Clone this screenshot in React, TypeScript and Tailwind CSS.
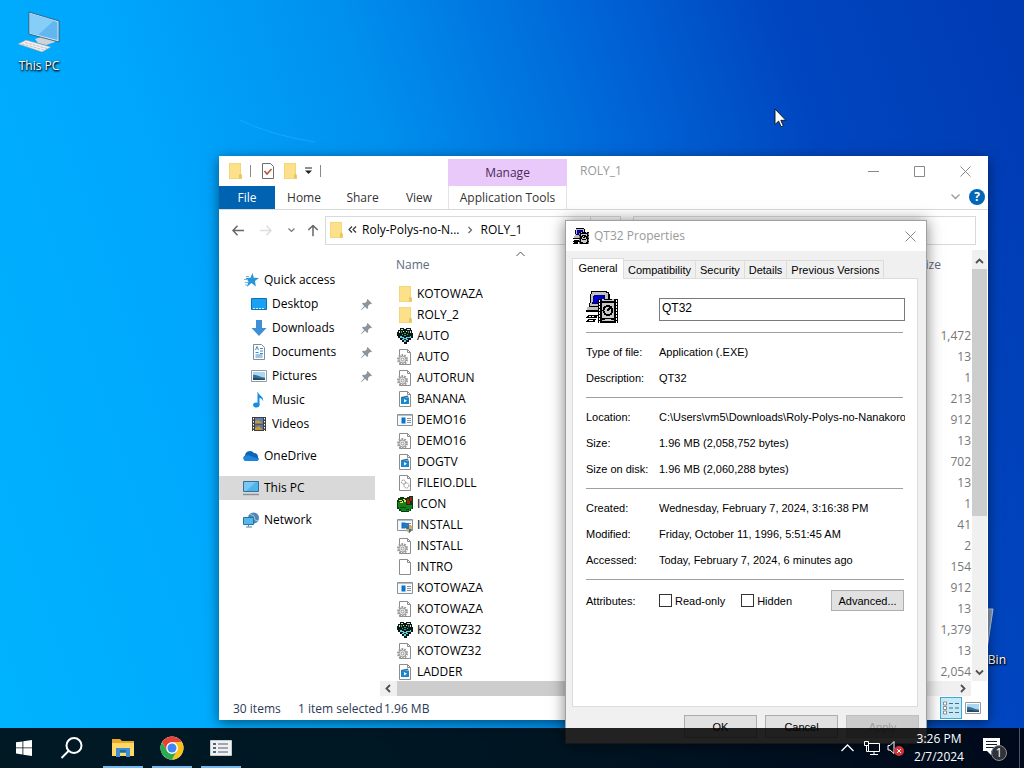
import { useState } from "react";
import type { ReactNode } from "react";

type FileKind = "folder" | "heart" | "ini" | "movie" | "exe" | "dll" | "roly" | "setup" | "blank";

type FileRow = {
  name: string;
  kind: FileKind;
  size: string;
};

const files: FileRow[] = [
  { name: "KOTOWAZA", kind: "folder", size: "" },
  { name: "ROLY_2", kind: "folder", size: "" },
  { name: "AUTO", kind: "heart", size: "1,472" },
  { name: "AUTO", kind: "ini", size: "13" },
  { name: "AUTORUN", kind: "ini", size: "1" },
  { name: "BANANA", kind: "movie", size: "213" },
  { name: "DEMO16", kind: "exe", size: "912" },
  { name: "DEMO16", kind: "ini", size: "13" },
  { name: "DOGTV", kind: "movie", size: "702" },
  { name: "FILEIO.DLL", kind: "dll", size: "13" },
  { name: "ICON", kind: "roly", size: "1" },
  { name: "INSTALL", kind: "setup", size: "41" },
  { name: "INSTALL", kind: "ini", size: "2" },
  { name: "INTRO", kind: "blank", size: "154" },
  { name: "KOTOWAZA", kind: "exe", size: "912" },
  { name: "KOTOWAZA", kind: "ini", size: "13" },
  { name: "KOTOWZ32", kind: "heart", size: "1,379" },
  { name: "KOTOWZ32", kind: "ini", size: "13" },
  { name: "LADDER", kind: "movie", size: "2,054" },
];

const details: [string, string][][] = [
  [
    ["Type of file:", "Application (.EXE)"],
    ["Description:", "QT32"],
  ],
  [
    ["Location:", "C:\\Users\\vm5\\Downloads\\Roly-Polys-no-Nanakorob"],
    ["Size:", "1.96 MB (2,058,752 bytes)"],
    ["Size on disk:", "1.96 MB (2,060,288 bytes)"],
  ],
  [
    ["Created:", "Wednesday, February 7, 2024, 3:16:38 PM"],
    ["Modified:", "Friday, October 11, 1996, 5:51:45 AM"],
    ["Accessed:", "Today, February 7, 2024, 6 minutes ago"],
  ],
];

const propertyTabs = ["General", "Compatibility", "Security", "Details", "Previous Versions"];

export default function App() {
  return (
    <div className="relative flex h-screen flex-col overflow-hidden bg-[linear-gradient(72deg,#00b4ff_0%,#00a6fc_28%,#0090ee_46%,#0068d8_64%,#0046c0_80%,#003ab2_100%)] font-['Open_Sans','Noto_Sans',sans-serif] text-[12px] leading-4 text-black select-none">
      <LightBeams />
      <DesktopIcons />
      <ExplorerWindow />
      <PropertiesDialog />
      <Taskbar />
      <svg className="absolute left-[774px] top-[108px]" width="13" height="20" viewBox="0 0 13 20" aria-hidden="true">
        <path d="M1 1v15.500l3.600-3.400 2.500 5.600 2.200-1-2.500-5.400h5z" fill="#fff" stroke="#111" strokeWidth="0.900" />
      </svg>
    </div>
  );
}

function LightBeams() {
  return (
    <svg className="absolute inset-0 h-full w-full" viewBox="0 0 1024 768" preserveAspectRatio="none" aria-hidden="true">
      <path d="M240 120Q270 135 315 142" fill="none" stroke="#6cccff" strokeWidth="1" opacity="0.250" />
    </svg>
  );
}

function DesktopIcons() {
  return (
    <>
      <button type="button" className="absolute left-[2px] top-[8px] flex w-[74px] flex-col items-center gap-[2px] text-white [text-shadow:0_1px_2px_#000,1px_1px_2px_#000]">
        <svg width="48" height="48" viewBox="0 0 48 48" aria-hidden="true">
          <path d="M20 31l6-2 14 3v2l-9 3-8-2z" fill="#cfd3d8" />
          <path d="M14 4l30 9v21l-30-8z" fill="#cfe9fb" stroke="#24506f" strokeWidth="0.800" />
          <path d="M15 5.500l27.500 8.500v18L15 25z" fill="#63b7f0" />
          <path d="M15 5.500l24 7-16 14.500-8-2z" fill="#86cdf8" />
          <path d="M3 36l8-4 25 7-9 5z" fill="#eef0f2" stroke="#8b98a5" strokeWidth="0.600" />
          <path d="M7 36l22 6M10 34.500l22 6" stroke="#a6adb5" strokeWidth="0.700" strokeDasharray="3 1" />
        </svg>
        <span>This PC</span>
      </button>
      <button type="button" aria-label="Recycle Bin" className="absolute left-[934px] top-[606px] flex w-[72px] flex-col items-center gap-[2px] text-white [text-shadow:0_1px_2px_#000,1px_1px_2px_#000]">
        <svg width="48" height="44" viewBox="0 0 48 44" aria-hidden="true">
          <path d="M5 3h42l-6 40H11z" fill="#8b9cb5" stroke="#b9cde8" />
        </svg>
        <span className="w-full text-right">Bin</span>
      </button>
    </>
  );
}

function ExplorerWindow() {
  return (
    <section aria-label="ROLY_1" className="absolute left-[219px] top-[156px] flex h-[564px] w-[769px] flex-col bg-white shadow-[0_3px_12px_rgba(0,0,0,0.5)]">
      <header className="flex h-[54px] shrink-0 border-b border-[#d9d9d9]">
        <div className="flex w-[228px] flex-col">
          <div className="flex h-[30px] items-center pl-2">
            <FileIcon kind="folder" />
            <Divider />
            <svg className="ml-[10px]" width="14" height="16" viewBox="0 0 14 16" aria-hidden="true">
              <path d="M1.500.5h8l3 3v12h-11z" fill="#fff" stroke="#6e6e6e" />
              <path d="M3.500 8l2.500 3 4.500-5" fill="none" stroke="#b3562f" strokeWidth="1.500" />
            </svg>
            <span className="ml-[7px]"><FileIcon kind="folder" /></span>
            <button type="button" aria-label="Customize Quick Access Toolbar" className="ml-[6px]">
              <svg width="9" height="8" viewBox="0 0 9 8" aria-hidden="true">
                <path d="M1 1h7" stroke="#222" />
                <path d="M1 3.500h7L4.500 7z" fill="#222" />
              </svg>
            </button>
            <Divider />
          </div>
          <nav className="flex h-[23px] text-[#333]">
            <button type="button" className="w-[56px] bg-[#0063b1] pt-px text-white">File</button>
            <button type="button" className="w-[58px] pt-px">Home</button>
            <button type="button" className="w-[59px] pt-px">Share</button>
            <button type="button" className="w-[54px] pt-px">View</button>
          </nav>
        </div>
        <div className="ml-px w-[119px] text-center">
          <div className="mt-[3px] h-[27px] bg-[#e9c9f9] pt-[6px] text-[#4a2a5c]">Manage</div>
          <button type="button" className="h-[23px] w-full border-x border-[#e6e0e9] pt-px text-[#333]">Application Tools</button>
        </div>
        <div className="flex flex-1 flex-col">
          <div className="flex h-[30px] items-center">
            <h1 className="ml-[13px] flex-1 text-[#999]">ROLY_1</h1>
            <button type="button" aria-label="Minimize" className="flex w-[46px] justify-center"><Glyph d="M0 5.500h11" /></button>
            <button type="button" aria-label="Maximize" className="flex w-[46px] justify-center"><Glyph d="M.5.500h10v10H.5z" /></button>
            <button type="button" aria-label="Close" className="flex w-[46px] justify-center"><Glyph d="M.5.500l10 10M10.500.500l-10 10" /></button>
          </div>
          <div className="flex items-center justify-end gap-[9px] pr-[3px] pt-[3px]">
            <button type="button" aria-label="Collapse ribbon">
              <svg width="9" height="6" viewBox="0 0 9 6" aria-hidden="true"><path d="M.5.500l4 4 4-4" fill="none" stroke="#999" strokeWidth="1.300" /></svg>
            </button>
            <button type="button" aria-label="Help" className="size-4 rounded-full bg-[#0067b8] text-[12px] leading-4 font-bold text-white">?</button>
          </div>
        </div>
      </header>

      <div className="flex h-[40px] shrink-0 items-center pr-3">
        <div className="flex w-[106px] items-center gap-[16px] pl-[13px]">
          <button type="button" aria-label="Back"><ArrowLeft color="#666" /></button>
          <button type="button" aria-label="Forward" className="rotate-180"><ArrowLeft color="#ddd" /></button>
          <button type="button" aria-label="Recent locations">
            <svg width="7" height="5" viewBox="0 0 7 5" aria-hidden="true"><path d="M.5.500l3 3 3-3" fill="none" stroke="#777" strokeWidth="1.200" /></svg>
          </button>
          <button type="button" aria-label="Up" className="-ml-1 rotate-90"><ArrowLeft color="#666" /></button>
        </div>
        <div className="flex h-[29px] flex-1 items-center border border-[#d9d9d9] pl-[2px]">
          <FileIcon kind="folder" />
          <svg className="ml-[4px]" width="9" height="8" viewBox="0 0 9 8" aria-hidden="true"><path d="M4 .5L1 3.500l3 3M8 .5L5 3.500l3 3" fill="none" stroke="#333" strokeWidth="1.200" /></svg>
          <button type="button" className="ml-[5px]">Roly-Polys-no-N...</button>
          <svg className="mx-[8px]" width="5" height="8" viewBox="0 0 5 8" aria-hidden="true"><path d="M.5 1l3 3-3 3" fill="none" stroke="#666" strokeWidth="1.200" /></svg>
          <button type="button">ROLY_1</button>
          <span className="ml-auto mr-[29px] h-full w-px bg-[#d9d9d9]" />
        </div>
        <input aria-label="Search ROLY_1" className="ml-[12px] h-[29px] w-[343px] border border-[#d9d9d9] px-2" />
      </div>

      <div className="flex min-h-0 flex-1">
        <nav aria-label="Folders" className="flex w-[156px] shrink-0 flex-col pt-[18px]">
          <NavItem icon="star" label="Quick access" />
          <NavItem icon="desktop" label="Desktop" child pinned />
          <NavItem icon="download" label="Downloads" child pinned />
          <NavItem icon="document" label="Documents" child pinned />
          <NavItem icon="picture" label="Pictures" child pinned />
          <NavItem icon="music" label="Music" child />
          <NavItem icon="video" label="Videos" child />
          <div className="mt-2"><NavItem icon="cloud" label="OneDrive" /></div>
          <div className="mt-2"><NavItem icon="pc" label="This PC" active /></div>
          <div className="mt-2"><NavItem icon="network" label="Network" /></div>
        </nav>
        <div className="ml-[5px] flex min-w-0 flex-1 flex-col">
          <div className="flex min-h-0 flex-1">
            <div className="min-w-0 flex-1 overflow-hidden">
              <table className="w-full border-collapse">
                <thead>
                  <tr className="h-[33px] text-left align-top text-[#5d6b7e]">
                    <th className="relative w-[281px] pl-4 pt-[7px] font-normal">
                      Name
                      <svg className="absolute left-[136px] top-[1px]" width="9" height="6" viewBox="0 0 9 6" aria-hidden="true"><path d="M.5 5l4-4 4 4" fill="none" stroke="#555" /></svg>
                    </th>
                    <th className="pl-[258px] pt-[7px] font-normal">Size</th>
                  </tr>
                </thead>
                <tbody>
                  {files.map((file, i) => (
                    <tr key={i} className="h-[21px]">
                      <td className="py-0 pl-[17px]">
                        <span className="flex items-center gap-1">
                          <FileIcon kind={file.kind} />
                          {file.name}
                        </span>
                      </td>
                      <td className="py-0 pr-px text-right text-[#777]">{file.size}</td>
                    </tr>
                  ))}
                </tbody>
              </table>
            </div>
            <div className="mr-px flex w-[15px] flex-col items-center bg-[#f0f0f0] pb-[4px] pt-[7px]">
              <Chevron d="M1 6l3.500-3.500L8 6" />
              <div className="mb-auto mt-[3px] h-[247px] w-full bg-[#cdcdcd]" />
              <Chevron d="M1 2.500L4.500 6 8 2.500" />
            </div>
          </div>
          <div className="mr-[17px] flex h-[15px] items-center bg-[#f0f0f0] px-[4px]">
            <Chevron d="M6 1L2.500 4.500 6 8" />
            <div className="ml-[4px] h-full w-[450px] bg-[#cdcdcd]" />
            <span className="ml-auto"><Chevron d="M3 1l3.500 3.500L3 8" /></span>
          </div>
        </div>
      </div>

      <footer className="flex h-[24px] shrink-0 items-center pl-[14px] text-[#2b3a57]">
        <span className="w-[65px] pt-px">30 items</span>
        <span className="w-[86px] whitespace-nowrap pt-px">1 item selected</span>
        <span className="pt-px">1.96 MB</span>
        <button type="button" aria-label="Details view" className="ml-auto flex h-[22px] w-[22px] items-center justify-center border border-[#3fa9cf] bg-[#c5e9f7]">
          <svg width="16" height="14" viewBox="0 0 16 14" aria-hidden="true">
            <path d="M.5 1h3v3h-3zM.5 5.500h3v3h-3zM.5 10h3v3h-3z" fill="#fff" stroke="#777" strokeWidth="0.800" />
            <path d="M6 2.500h10M6 7h10M6 11.500h10" stroke="#3b6d8c" strokeDasharray="4 2" />
          </svg>
        </button>
        <button type="button" aria-label="Large icons view" className="ml-[3px] mr-[7px]">
          <NavIcon name="picture" />
        </button>
      </footer>
    </section>
  );
}

function PropertiesDialog() {
  const [tab, setTab] = useState("General");
  const [name, setName] = useState("QT32");

  return (
    <section role="dialog" aria-label="QT32 Properties" className="absolute left-[565px] top-[220px] flex h-[524px] w-[362px] flex-col border border-[#a0a0a0] bg-[#f0f0f0] shadow-[0_1px_14px_rgba(0,0,0,0.5)]">
      <header className="flex h-[30px] shrink-0 items-center bg-white pl-[7px] pr-[10px]">
        <MovieIcon size={16} />
        <h2 className="ml-[5px] flex-1 text-[#999]">QT32 Properties</h2>
        <button type="button" aria-label="Close dialog"><Glyph d="M.5.500l10 10M10.500.500l-10 10" /></button>
      </header>
      <div className="flex flex-1 flex-col px-[6px] pt-[7px] font-['Liberation_Sans',Arial,sans-serif] text-[11px] leading-[14px]">
        <div role="tablist" className="relative z-10 -mb-px flex items-end">
          {propertyTabs.map((label) => (
            <button
              key={label}
              type="button"
              role="tab"
              aria-selected={tab === label}
              onClick={() => setTab(label)}
              className={
                tab === label
                  ? "h-[21px] w-[52px] border border-b-0 border-[#dcdcdc] bg-white pb-[2px]"
                  : "mb-px h-[18px] border border-b-0 border-l-0 border-[#dcdcdc] px-[4px]"
              }
            >
              {label}
            </button>
          ))}
        </div>
        <div className="mr-[2px] flex h-[429px] flex-col border border-[#dcdcdc] bg-white pl-[13px] pr-[12px] pt-[12px]">
          <div className="flex h-[41px] items-start">
            <span className="w-[73px]"><MovieIcon size={32} /></span>
            <input
              aria-label="File name"
              value={name}
              onChange={(e) => setName(e.target.value)}
              className="mt-[7px] h-[23px] min-w-0 flex-1 border border-[#7a7a7a] bg-white px-[2px] pb-[3px] text-[12px] outline-none"
            />
          </div>
          {details.map((group, i) => (
            <dl key={i} className="mr-[2px] flex flex-col gap-[12px] border-t border-[#a0a0a0] pb-[12px] pt-[12px]">
              {group.map(([label, value]) => (
                <div key={label} className="-mr-[2px] flex">
                  <dt className="w-[73px] shrink-0">{label}</dt>
                  <dd className="min-w-0 overflow-hidden whitespace-nowrap">{value}</dd>
                </div>
              ))}
            </dl>
          ))}
          <div className="mr-px flex items-center border-t border-[#a0a0a0] pt-[10px]">
            <span className="w-[73px]">Attributes:</span>
            <Check label="Read-only" />
            <span className="w-[16px]" />
            <Check label="Hidden" />
            <button type="button" className="ml-auto h-[21px] w-[73px] border border-[#adadad] bg-[#e1e1e1]">Advanced...</button>
          </div>
        </div>
        <div className="flex justify-end gap-[8px] pr-px pt-[8px]">
          <button type="button" className="h-[23px] w-[73px] border border-[#adadad] bg-[#e1e1e1]">OK</button>
          <button type="button" className="h-[23px] w-[73px] border border-[#adadad] bg-[#e1e1e1]">Cancel</button>
          <button type="button" disabled className="h-[23px] w-[73px] border border-[#bfbfbf] bg-[#cccccc] text-[#a0a0a0]">Apply</button>
        </div>
      </div>
    </section>
  );
}

function Taskbar() {
  return (
    <footer className="relative mt-auto flex h-[40px] items-center bg-black/[0.86] text-white">
      <button type="button" aria-label="Start" className="flex h-full w-[48px] items-center justify-center">
        <svg width="16" height="16" viewBox="0 0 16 16" fill="#fff" aria-hidden="true"><path d="M0 2.300l6.500-.9v6.100H0zM7.300 1.300L16 0v7.500H7.300zM0 8.300h6.500v6.200L0 13.600zM7.300 8.300H16V16l-8.700-1.300z" /></svg>
      </button>
      <button type="button" aria-label="Search" className="flex h-full w-[48px] items-center justify-center">
        <svg width="24" height="24" viewBox="0 0 24 24" fill="none" stroke="#fff" strokeWidth="2" aria-hidden="true"><circle cx="14" cy="9.500" r="7.500" /><path d="M8.500 15L1.500 22" /></svg>
      </button>
      <TaskButton label="File Explorer">
        <svg width="22" height="20" viewBox="0 0 22 20" aria-hidden="true">
          <path d="M0 1h8l2 2h12v15H0z" fill="#e7a928" />
          <path d="M0 5h22v13H0z" fill="#ffd868" />
          <path d="M4 10h14v9h-4v-4H8v4H4z" fill="#3b8ed0" />
          <path d="M8 12h6v2H8z" fill="#1f69ac" />
        </svg>
      </TaskButton>
      <TaskButton label="Google Chrome">
        <svg width="24" height="24" viewBox="0 0 48 48" aria-hidden="true">
          <circle cx="24" cy="24" r="23" fill="#fff" />
          <path d="M4.100 12.500A23 23 0 0 1 43.900 12.500H24A11.500 11.500 0 0 0 14 18.200L13.500 29z" fill="#e94235" />
          <path d="M43.900 12.500A23 23 0 0 1 24 47L34 29.700A11.500 11.500 0 0 0 24 12.500z" fill="#fbc116" />
          <path d="M4.100 12.500A23 23 0 0 0 24 47L34 29.700A11.500 11.500 0 0 1 14 29.700z" fill="#2da94f" />
          <circle cx="24" cy="24" r="11.500" fill="#fff" />
          <circle cx="24" cy="24" r="9" fill="#4285f4" />
        </svg>
      </TaskButton>
      <TaskButton label="Properties">
        <svg width="22" height="16" viewBox="0 0 22 16" aria-hidden="true">
          <path d="M.5.500h21v15H.5z" fill="#f1f1f1" stroke="#c5ccd0" />
          <path d="M3 4h3M3 8h3M3 12h3" stroke="#567" strokeWidth="2" />
          <path d="M8 4h10M8 8h10M8 12h10" stroke="#83909a" strokeWidth="1.400" />
        </svg>
      </TaskButton>
      <div className="ml-auto flex h-full items-center">
        <button type="button" aria-label="Show hidden icons">
          <svg width="13" height="8" viewBox="0 0 13 8" fill="none" stroke="#fff" strokeWidth="1.300" aria-hidden="true"><path d="M.5 7l6-6 6 6" /></svg>
        </button>
        <svg className="ml-[10px]" width="17" height="15" viewBox="0 0 17 15" fill="none" stroke="#fff" aria-hidden="true">
          <path d="M4.500 2.500h11v8h-11zM10 10.500v3M6 13.500h8M.5.500h4v4h-4zM2.500 4.500v6h2" />
        </svg>
        <svg className="ml-[6px]" width="18" height="16" viewBox="0 0 18 16" aria-hidden="true">
          <path d="M1 5.500h2l4-4v12l-4-3.500H1z" fill="none" stroke="#fff" />
          <circle cx="12" cy="11" r="5" fill="#d13438" />
          <path d="M10 9l4 4M14 9l-4 4" stroke="#fff" />
        </svg>
        <button type="button" className="ml-px w-[66px] text-center leading-[18px]">
          <span className="block">3:26 PM</span>
          <span className="block">2/7/2024</span>
        </button>
        <button type="button" aria-label="Notifications" className="ml-[10px] mr-[11px]">
          <svg width="26" height="26" viewBox="0 0 26 26" aria-hidden="true">
            <path d="M1 3h17v13h-9v4l-4-4H1z" fill="#fff" />
            <path d="M4 6.500h11M4 9.500h11M4 12.500h8" stroke="#111a2a" />
            <circle cx="17" cy="18" r="7.500" fill="#2f3238" stroke="#8b8f96" />
            <text x="17" y="22" textAnchor="middle" fontSize="12" fill="#fff">1</text>
          </svg>
        </button>
        <div className="mr-[4px] h-full w-px bg-[#4b5568]" />
      </div>
    </footer>
  );
}

function TaskButton({ label, children }: { label: string; children: ReactNode }) {
  return (
    <button type="button" aria-label={label} className="relative ml-[7px] mr-[2px] flex h-full w-[40px] items-center justify-center border-b-2 border-[#76b9ed] pt-[2px]">
      {children}
    </button>
  );
}

function Check({ label }: { label: string }) {
  return (
    <label className="flex items-center gap-[3px]">
      <input type="checkbox" className="size-[13px] appearance-none border border-[#333] bg-white checked:bg-[#0078d7]" />
      {label}
    </label>
  );
}

function Divider() {
  return <span className="ml-[7px] h-[12px] w-px bg-[#888]" />;
}

function Glyph({ d }: { d: string }) {
  return (
    <svg width="11" height="11" viewBox="0 0 11 11" fill="none" stroke="#888" aria-hidden="true">
      <path d={d} />
    </svg>
  );
}

function Chevron({ d }: { d: string }) {
  return (
    <svg className="shrink-0" width="9" height="9" viewBox="0 0 9 9" fill="none" stroke="#505050" strokeWidth="1.800" aria-hidden="true">
      <path d={d} />
    </svg>
  );
}

function ArrowLeft({ color }: { color: string }) {
  return (
    <svg width="12" height="11" viewBox="0 0 12 11" fill="none" stroke={color} strokeWidth="1.500" aria-hidden="true">
      <path d="M12 5.500H1M5.500.800L1 5.500l4.500 4.700" />
    </svg>
  );
}

type NavItemProps = {
  icon: string;
  label: string;
  child?: boolean;
  pinned?: boolean;
  active?: boolean;
};

function NavItem({ icon, label, child, pinned, active }: NavItemProps) {
  return (
    <button
      type="button"
      className={`flex h-6 w-full items-center gap-[5px] pr-[3px] ${child ? "pl-[32px]" : "pl-[24px]"} ${active ? "bg-[#d9d9d9]" : ""}`}
    >
      <NavIcon name={icon} />
      <span>{label}</span>
      {pinned && (
        <svg className="ml-auto" width="11" height="11" viewBox="0 0 11 11" fill="#8c959d" aria-hidden="true">
          <path d="M6.500 0L11 4.500l-1 .7-1-.2-2 2 .2 2-1 1L4 7.800.500 11 0 10.500 3.200 7 1 4.800l1-1 2 .2 2-2-.2-1z" />
        </svg>
      )}
    </button>
  );
}

function NavIcon({ name }: { name: string }) {
  return (
    <svg className="shrink-0" width="16" height="16" viewBox="0 0 16 16" aria-hidden="true">
      {name === "star" && (
        <>
          <path d="M9.500 1l1.300 4.800 5.200.2-4 3 .8 5.500L8.500 11l-4.700 4 1.700-5.500L2.500 6l5-.2z" fill="#2b93d8" />
          <path d="M3 4.500h3M1 7.500h4M2 10.500h3M2 13h2" stroke="#6fb6e6" />
        </>
      )}
      {name === "desktop" && (
        <>
          <path d="M.5 2.500h15v11H.5z" fill="#1ba1f3" stroke="#0b71b8" />
          <path d="M2 12.500h12" stroke="#d4f1ff" strokeDasharray="2 1" />
        </>
      )}
      {name === "download" && <path d="M5 0h6v8h4.500L8 16 .5 8H5z" fill="#3f8fd6" />}
      {name === "document" && (
        <>
          <path d="M2.500.500h8l3 3v12h-11z" fill="#fff" stroke="#7f8c99" />
          <path d="M4.500 6l1.500-3.500L7.500 6M9 4.500h3M4.500 8.500h3M9 7h3M9 9.500h3M4.500 11h7M4.500 13h7" fill="none" stroke="#3c8cc8" />
        </>
      )}
      {name === "picture" && (
        <>
          <path d="M.5 2.500h15v11H.5z" fill="#fff" stroke="#909ba5" />
          <path d="M2 4h12v8H2z" fill="#a9d8f6" />
          <path d="M2 7c4-1 7 3 12 2.500V12H2z" fill="#3d6f9b" />
          <path d="M2 10c4-1 8 1 12 1v1H2z" fill="#234d53" />
        </>
      )}
      {name === "music" && (
        <>
          <path d="M7 0c.5 3.500 6.500 4.500 5 10 0-3-2.500-4-3.500-4v7H6.500V0z" fill="#168de2" />
          <ellipse cx="5.300" cy="13" rx="3.200" ry="2.500" fill="#168de2" />
        </>
      )}
      {name === "video" && (
        <>
          <path d="M1 1h14v14H1z" fill="#3a3f46" />
          <path d="M4 2h8v5.500H4z" fill="#6380b4" />
          <path d="M4 8.500h8V14H4z" fill="#5d77a5" />
          <path d="M4 5l3-1 5 3.500H4zM4 12l4-2 4 4H4z" fill="#cb9834" />
          <path d="M2.500 2v13M13.500 2v13" stroke="#fff" strokeDasharray="1.500 1.500" />
        </>
      )}
      {name === "cloud" && (
        <>
          <path d="M2.500 13a3 3 0 0 1-.5-5.500 5 5 0 0 1 9-2.500 4 4 0 0 1 4 4.500 2 2 0 0 1-1 3.500z" fill="#0f64b8" />
          <path d="M1.500 8c4-2 7 1 14 2.500a2.300 2.300 0 0 1-2 2.500h-11A3 3 0 0 1 1.500 8z" fill="#1c86dc" />
        </>
      )}
      {name === "pc" && (
        <>
          <path d="M.5 1.500h15v10H.5z" fill="#50b4ec" stroke="#376f98" />
          <path d="M1 2h12L3 11H1z" fill="#78c8f5" />
          <path d="M0 14.500h16" stroke="#8a9298" strokeWidth="1.500" />
        </>
      )}
      {name === "network" && (
        <>
          <circle cx="10.500" cy="6" r="5.500" fill="#4e88b6" />
          <path d="M7 2l4 2 1 4 3 1" fill="none" stroke="#a7c9e3" />
          <path d="M.5 5.500h10v7H.5z" fill="#51b9ee" stroke="#28739f" />
          <path d="M5.500 12.500v2M3 15h6" stroke="#51819f" />
        </>
      )}
    </svg>
  );
}

function FileIcon({ kind }: { kind: FileKind }) {
  if (kind === "folder") {
    return (
      <svg className="shrink-0" width="16" height="16" viewBox="0 0 16 16" aria-hidden="true">
        <path d="M2 0h12v11l1 1v4H2z" fill="#efcf6c" />
        <path d="M2.500.500h11v11l1 1v3h-12z" fill="#fce08a" />
        <path d="M12 15.500v-4l1.500-1 1 2v3z" fill="#e9c55a" />
      </svg>
    );
  }
  if (kind === "heart") {
    return (
      <svg className="shrink-0" width="16" height="16" viewBox="0 0 16 16" shapeRendering="crispEdges" aria-hidden="true">
        <path d="M1 4V2h2V0h4v1h2V0h5v2h1v3h1v5h-2v2h-2v2h-2v2H7v-2H5v-2H3v-2H1V8H0V4z" fill="#0d1716" />
        <path d="M1 8h2v2h2v2h2v2h2v-2h2v-2h3V8h-1v1H9v1H7V9H5V8z" fill="#62cfdc" />
        <path d="M2 3h1v2H2zM4 1h2v1H4zM6 3h1v1H6zM10 1h3v1h-3zM13 3h1v2h-1zM9 3h1v1H9z" fill="#cfe9dd" />
        <path d="M4 3h1v2H4zM11 3h1v2h-1zM7 5h2v1H7zM5 6h1v1H5zM10 6h1v1h-1zM7 7h2v1H7z" fill="#3aa56c" />
        <path d="M5 10h1v1H5zM7 11h2v1H7zM10 10h1v1h-1z" fill="#123" />
      </svg>
    );
  }
  if (kind === "roly") {
    return (
      <svg className="shrink-0" width="16" height="16" viewBox="0 0 16 16" shapeRendering="crispEdges" aria-hidden="true">
        <path d="M0 4h1V2h2V1h4v1h3V1h2V0h4v13h-2v2h-2v1H4v-1H2v-2H0z" fill="#063c12" />
        <path d="M1 6h8v3h6v4h-2v2H4v-2H2v-2H1z" fill="#16801e" />
        <path d="M2 4h3v1H2zM6 3h2v1H6zM5 5h1v2H5zM7 4h2v2H7zM3 6h2v1H3z" fill="#e9e53a" />
        <path d="M10 3h2v5h-2zM13 1h2v4h-2zM12 5h1v3h-1z" fill="#b01818" />
        <path d="M3 11h6v1H3zM9 13h3v1H9z" fill="#074a12" />
      </svg>
    );
  }
  if (kind === "exe" || kind === "setup") {
    return (
      <svg className="shrink-0" width="16" height="16" viewBox="0 0 16 16" aria-hidden="true">
        <path d="M.5 2.500h15v11H.5z" fill="#f7f9fa" stroke="#87929a" />
        <path d="M1 3.500h14" stroke="#b5bec5" />
        <path d="M4.500 5.500h4v6h-4z" fill="#0873c9" />
        <path d="M10 6.500h4M10 8.500h4M10 10.500h4" stroke="#87929a" />
        {kind === "setup" && (
          <>
            <path d="M6 6h6v5H6z" fill="#2676c7" />
            <path d="M9 9c2 0 2-1 3-1 1 0 1 1 3 1 0 4-1 6-3 7-2-1-3-3-3-7z" fill="#d5b146" />
            <path d="M12 8c-1 0-1 1-3 1 0 1 0 2 .300 3H12zM12 12h2.700c-.5 2-1.200 3.300-2.700 4z" fill="#2e6ea9" />
          </>
        )}
      </svg>
    );
  }
  return (
    <svg className="shrink-0" width="16" height="16" viewBox="0 0 16 16" aria-hidden="true">
      <path d="M2.500.500h8l3 3v12h-11z" fill="#fff" stroke="#8d8d8d" />
      <path d="M10.500.500v3h3" fill="none" stroke="#8d8d8d" />
      {kind === "ini" && (
        <>
          <circle cx="5.500" cy="10.500" r="4.500" fill="#fff" stroke="#999" strokeWidth="2" strokeDasharray="1.700 1.100" />
          <circle cx="5.500" cy="10.500" r="3.500" fill="#e4e4e4" stroke="#888" strokeWidth="0.800" />
          <circle cx="5.500" cy="10.500" r="1.300" fill="#fff" stroke="#888" strokeWidth="0.800" />
        </>
      )}
      {kind === "dll" && (
        <>
          <circle cx="6.500" cy="7" r="2" fill="#fff" stroke="#888" strokeDasharray="1.500 .600" />
          <circle cx="9.500" cy="10.500" r="2.500" fill="#fff" stroke="#888" strokeDasharray="1.500 .600" />
        </>
      )}
      {kind === "movie" && (
        <>
          <path d="M4 6.500h8v6.500H4z" fill="#1788ce" />
          <path d="M4 6l7-1.500.3 1.500-7 1.500z" fill="#3a6f91" />
          <path d="M7 8l3 1.800-3 1.800z" fill="#fff" />
        </>
      )}
    </svg>
  );
}

function MovieIcon({ size }: { size: number }) {
  return (
    <svg width={size} height={size} viewBox="0 0 32 32" shapeRendering="crispEdges" aria-hidden="true">
      <path d="M5 0h16v1h2v2h1v12h-2v2H3v-5h1V3h1z" fill="#000" />
      <path d="M6 1h14v1h2v10h-2v3H4v-3h1V3h1z" fill="#c0c0c0" />
      <path d="M8 4h11v9H6v-2h1V5h1z" fill="#000080" />
      <path d="M9 5h8v6H8V6h1z" fill="#0000d8" />
      <path d="M1 16h12v3H1z" fill="#c0c0c0" />
      <path d="M0 19h13v2H0zM2 24h10v1h-1v2H0v-1h1v-1h1zM2 28h8v1H9v2H0v-1h1v-1h1z" fill="#000" />
      <path d="M3 25h2v1H3zM6 25h2v1H6zM3 29h4v1H3z" fill="#fff" />
      <path d="M12 8h20v24H12z" fill="#000" />
      <path d="M14 9h1v22h-1zM29 9h1v22h-1z" fill="#000" />
      <path d="M13.500 9v23M30.500 9v23" stroke="#fff" strokeDasharray="2 1" />
      <path d="M16 12h12v15H16zM16 8h2v1h8V8h2v2H16zM16 29h3v-1h6v1h3v1H16z" fill="#c8c8c8" />
      <circle cx="22" cy="19.500" r="4.500" fill="none" stroke="#000" strokeWidth="2" />
      <path d="M21 20l4-4" stroke="#000" strokeWidth="2" />
    </svg>
  );
}
